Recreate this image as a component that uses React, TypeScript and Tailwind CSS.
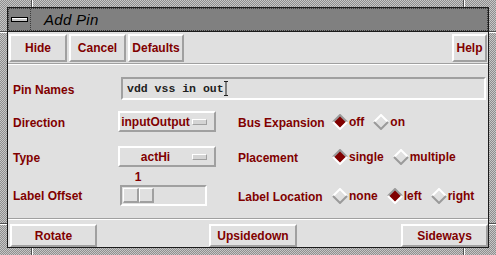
import React from "react";

const raised =
  "border-2 border-t-white border-l-white border-b-[#a0a0a0] border-r-[#a0a0a0]";
const sunken =
  "border-2 border-t-[#a0a0a0] border-l-[#a0a0a0] border-b-white border-r-white";

function Btn({ children, className = "" }: { children: React.ReactNode; className?: string }) {
  return (
    <div
      className={`flex items-center justify-center ${raised} bg-[#e0e0e0] text-[#800000] font-bold text-[12px] leading-none ${className}`}
    >
      {children}
    </div>
  );
}

function Diamond({ on }: { on: boolean }) {
  const top = on ? "#9a9a9a" : "#ffffff";
  const bot = on ? "#ffffff" : "#9a9a9a";
  return (
    <svg width="16" height="16" viewBox="0 0 16 16" className="shrink-0">
      <polygon points="8,1 15,8 8,15 1,8" fill={on ? "#800000" : "#e0e0e0"} />
      <polyline points="1,8 8,1 15,8" fill="none" stroke={top} strokeWidth="2" />
      <polyline points="1,8 8,15 15,8" fill="none" stroke={bot} strokeWidth="2" />
    </svg>
  );
}

function Radio({ label, on, first }: { label: string; on: boolean; first?: boolean }) {
  return (
    <div className={`flex items-center gap-[1px] ${first ? "" : "ml-[9px]"}`}>
      <Diamond on={on} />
      <span className="text-[#800000] font-bold text-[12px] leading-none">{label}</span>
    </div>
  );
}

function OptionMenu({ label }: { label: string }) {
  return (
    <div className={`w-[98px] h-[21px] flex items-center ${raised} bg-[#e0e0e0]`}>
      <span className="flex-1 text-center text-[#800000] font-bold text-[12px] leading-none whitespace-nowrap">
        {label}
      </span>
      <div className="w-[15px] h-[6px] ml-[1px] mr-[7px] border border-t-white border-l-white border-b-[#a0a0a0] border-r-[#a0a0a0] bg-[#d4d4d4]" />
    </div>
  );
}

function Label({ children }: { children: React.ReactNode }) {
  return <span className="text-[#800000] font-bold text-[12px] leading-none whitespace-nowrap">{children}</span>;
}

function Separator() {
  return (
    <div className="h-[2px] flex flex-col">
      <div className="h-[1px] bg-[#a0a0a0]" />
      <div className="h-[1px] bg-white" />
    </div>
  );
}

export default function App() {
  return (
    <div
      className="relative w-[496px] h-[255px] overflow-hidden p-[7px] bg-[image:repeating-conic-gradient(#8e8e8e_0_25%,#c6c6c6_0_50%)] bg-[length:2px_2px]"
      style={{ fontFamily: '"Liberation Sans", Arial, Helvetica, sans-serif' }}
    >
      {/* frame notches */}
      <div className="absolute left-[31px] top-0 w-[1px] h-[7px] bg-[#505050]" />
      <div className="absolute left-[32px] top-0 w-[1px] h-[7px] bg-white" />
      <div className="absolute left-[463px] top-0 w-[1px] h-[7px] bg-[#505050]" />
      <div className="absolute left-[464px] top-0 w-[1px] h-[7px] bg-white" />
      <div className="absolute left-[31px] bottom-0 w-[1px] h-[7px] bg-[#505050]" />
      <div className="absolute left-[32px] bottom-0 w-[1px] h-[7px] bg-white" />
      <div className="absolute left-[463px] bottom-0 w-[1px] h-[7px] bg-[#505050]" />
      <div className="absolute left-[464px] bottom-0 w-[1px] h-[7px] bg-white" />
      <div className="absolute left-0 top-[31px] w-[7px] h-[1px] bg-[#505050]" />
      <div className="absolute left-0 top-[32px] w-[7px] h-[1px] bg-white" />
      <div className="absolute right-0 top-[31px] w-[7px] h-[1px] bg-[#505050]" />
      <div className="absolute right-0 top-[32px] w-[7px] h-[1px] bg-white" />
      <div className="absolute left-0 top-[223px] w-[7px] h-[1px] bg-[#505050]" />
      <div className="absolute left-0 top-[224px] w-[7px] h-[1px] bg-white" />
      <div className="absolute right-0 top-[223px] w-[7px] h-[1px] bg-[#505050]" />
      <div className="absolute right-0 top-[224px] w-[7px] h-[1px] bg-white" />

      <div className="w-full h-full border border-[#1a1a1a] flex flex-col bg-[#e0e0e0]">
        {/* title bar */}
        <div className="h-[24px] border-b border-[#1a1a1a] flex flex-col">
          <div className="h-[23px] p-[1px] bg-[image:repeating-conic-gradient(#3a3a3a_0_25%,#808080_0_50%)] bg-[length:2px_2px] flex">
            <div className="w-[21px] h-full bg-[#808080] flex items-center justify-center">
              <div className="w-[17px] h-[5px] border border-black bg-[#c8c8c8]">
                <div className="h-[1px] bg-white" />
              </div>
            </div>
            <div className="w-[1px]" />
            <div className="flex-1 h-full bg-[#808080] flex items-center pl-[13px]">
              <span className="italic text-black text-[15px] leading-none tracking-[0.3px]">Add Pin</span>
            </div>
          </div>
        </div>

        {/* content */}
        <div className="flex-1 flex flex-col">
          {/* top buttons */}
          <div className="mt-[2px] h-[28px] flex pl-[1px] pr-[1px]">
            <Btn className="w-[58px] h-full">Hide</Btn>
            <Btn className="w-[57px] h-full ml-[2px]">Cancel</Btn>
            <Btn className="w-[56px] h-full ml-[2px]">Defaults</Btn>
            <Btn className="w-[35px] h-full ml-auto">Help</Btn>
          </div>
          <div className="mt-[1px]">
            <Separator />
          </div>

          {/* Pin names */}
          <div className="mt-[12px] h-[23px] flex items-center">
            <div className="w-[113px] pl-[5px]">
              <Label>Pin Names</Label>
            </div>
            <div className={`w-[365px] h-full ${sunken} flex items-center pl-[4px]`}>
              <span
                className="font-bold text-[11.5px] leading-none text-[#202020] whitespace-pre"
                style={{ fontFamily: '"Liberation Mono", "Courier New", monospace' }}
              >
                vdd vss in out
              </span>
              <svg width="5" height="15" viewBox="0 0 5 15">
                <path d="M0 0.5H4M0 14.5H4M2 0.5V14.5" stroke="#202020" strokeWidth="1" fill="none" />
              </svg>
            </div>
          </div>

          {/* Direction */}
          <div className="mt-[11px] h-[21px] flex items-center">
            <div className="w-[110px] pl-[5px]">
              <Label>Direction</Label>
            </div>
            <OptionMenu label="inputOutput" />
            <div className="w-[94px] ml-[22px]">
              <Label>Bus Expansion</Label>
            </div>
            <Radio label="off" on first />
            <Radio label="on" on={false} />
          </div>

          {/* Type */}
          <div className="mt-[14px] h-[21px] flex items-center">
            <div className="w-[110px] pl-[5px]">
              <Label>Type</Label>
            </div>
            <OptionMenu label="actHi" />
            <div className="w-[94px] ml-[22px]">
              <Label>Placement</Label>
            </div>
            <Radio label="single" on first />
            <Radio label="multiple" on={false} />
          </div>

          {/* Label offset */}
          <div className="mt-[3px] flex items-end">
            <div className="w-[112px] pl-[5px] h-[21px] flex items-center">
              <Label>Label Offset</Label>
            </div>
            <div className="flex flex-col w-[87px]">
              <div className="h-[14px] w-[36px] flex items-center justify-center">
                <span className="text-[#800000] font-bold text-[12px] leading-none">1</span>
              </div>
              <div className={`mt-[1px] h-[21px] w-[87px] ${sunken} flex`}>
                <div className="mt-[1px] ml-[1px] h-[15px] flex">
                  <div className="w-[16px] h-full border border-t-white border-l-white border-b-[#a0a0a0] border-r-[#a0a0a0] border-b-2 border-r-2" />
                  <div className="w-[15px] h-full border border-t-white border-l-white border-b-[#a0a0a0] border-r-[#a0a0a0] border-b-2 border-r-2" />
                </div>
              </div>
            </div>
            <div className="h-[21px] flex items-center">
              <div className="w-[94px] ml-[31px]">
                <Label>Label Location</Label>
              </div>
              <Radio label="none" on={false} first />
              <Radio label="left" on />
              <Radio label="right" on={false} />
            </div>
          </div>

          <div className="mt-[12px]">
            <Separator />
          </div>

          {/* bottom buttons */}
          <div className="mt-[4px] h-[23px] flex pl-[2px]">
            <Btn className="w-[87px] h-full">Rotate</Btn>
            <Btn className="w-[88px] h-full ml-[112px]">Upsidedown</Btn>
            <Btn className="w-[87px] h-full ml-auto">Sideways</Btn>
          </div>
        </div>
      </div>
    </div>
  );
}
